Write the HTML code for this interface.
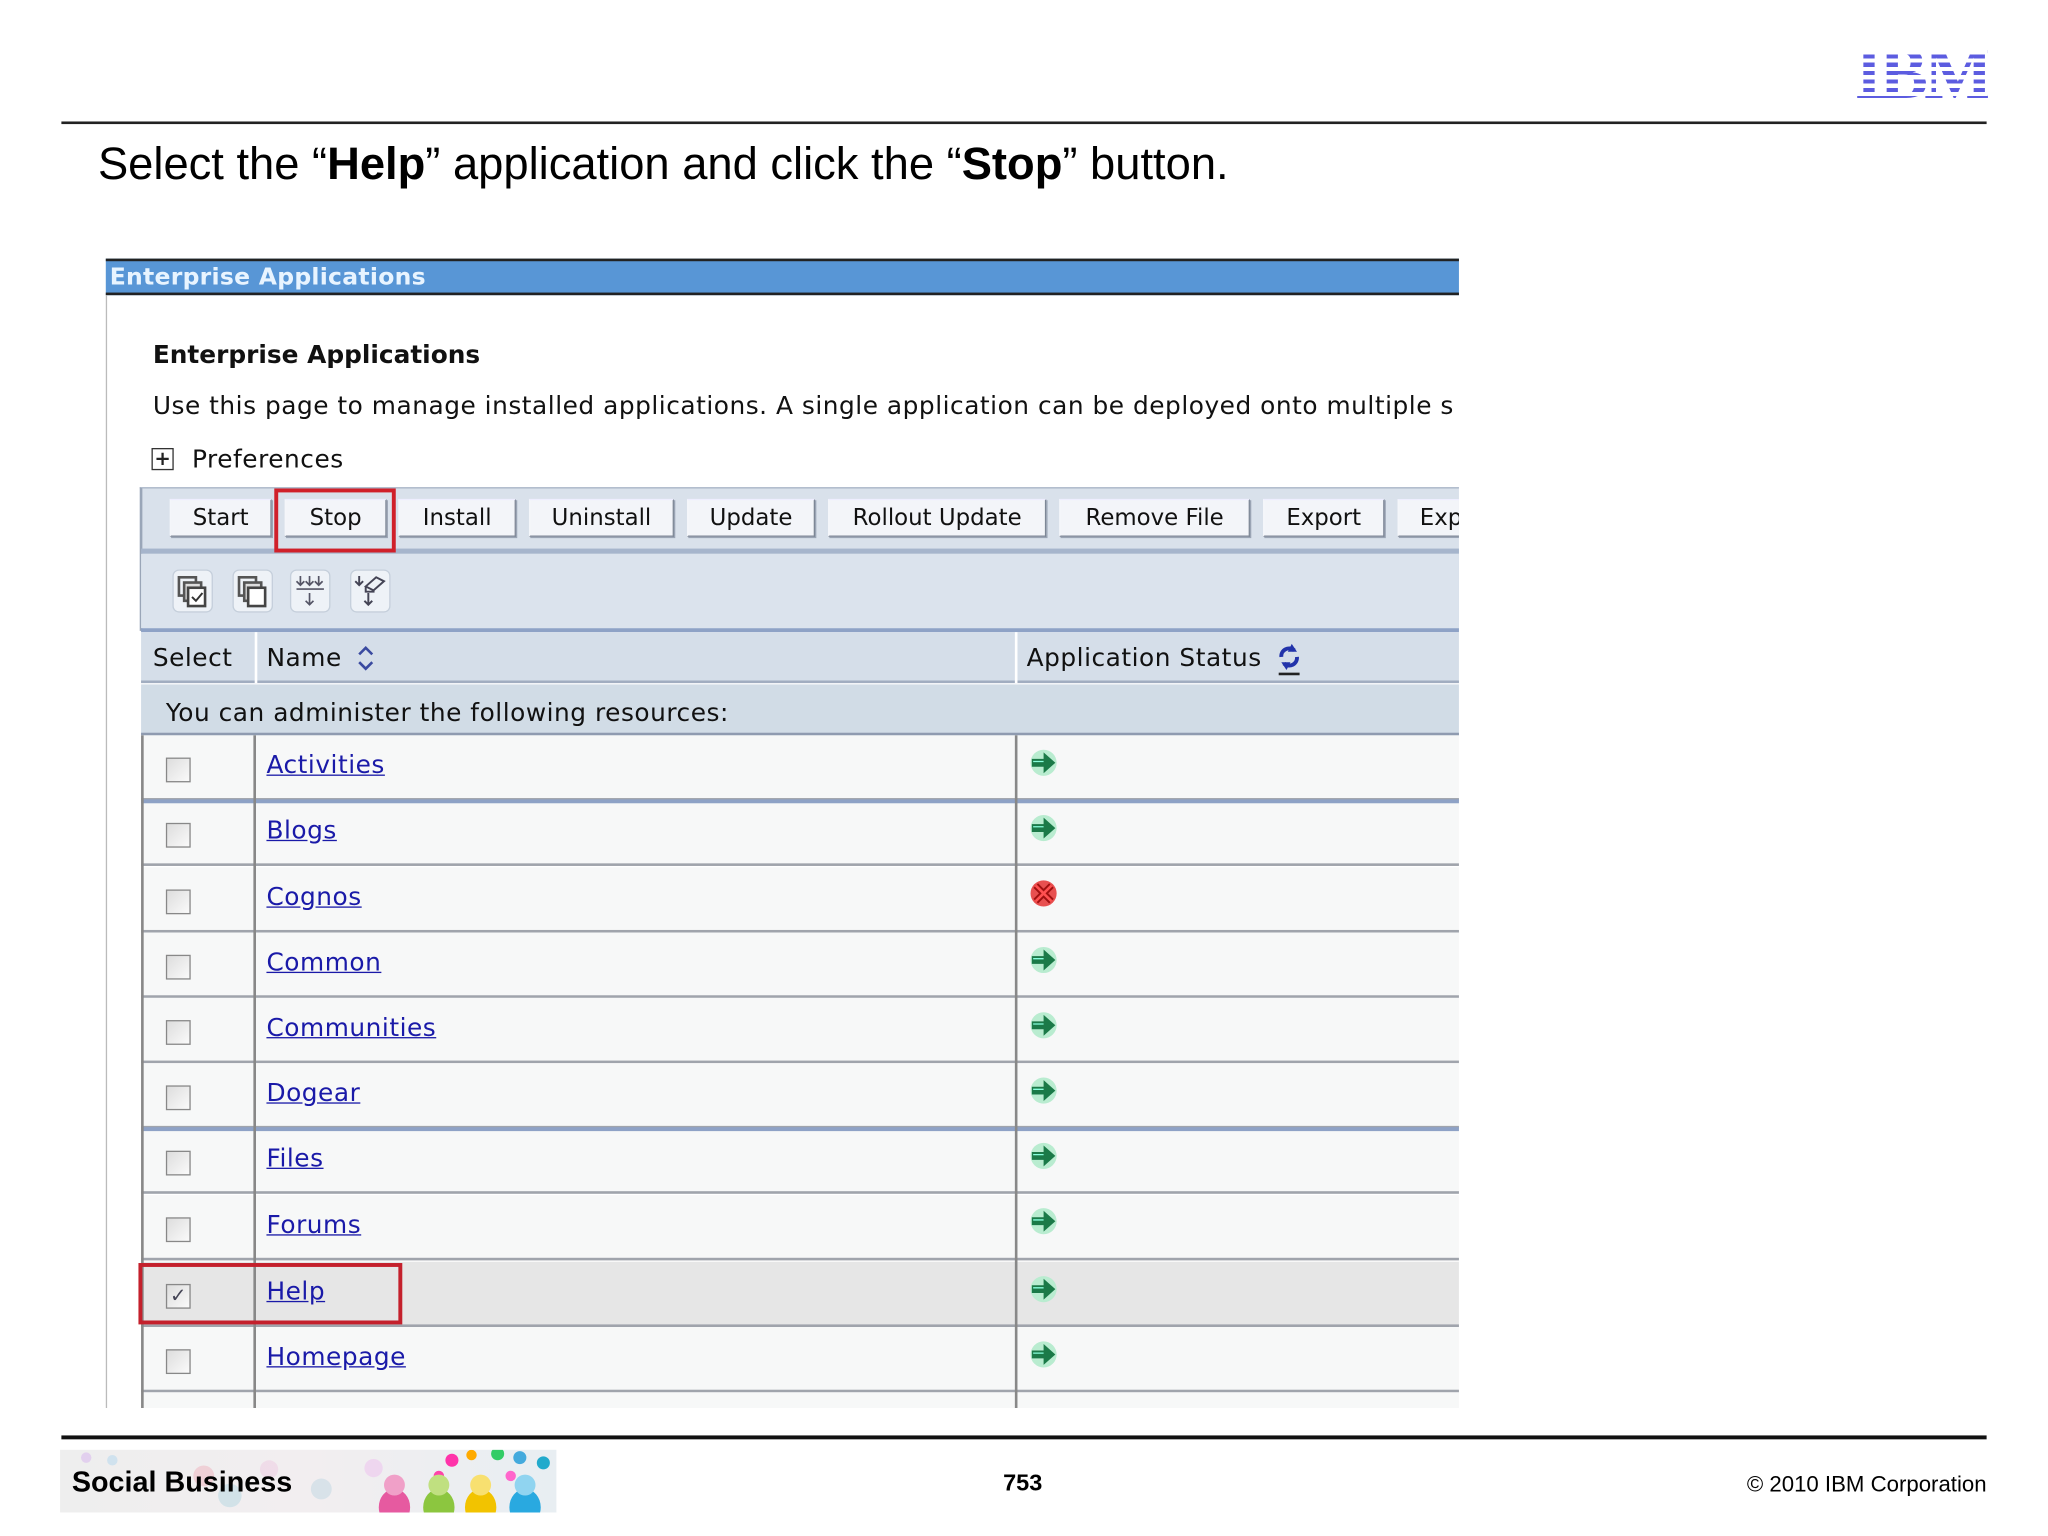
<!DOCTYPE html>
<html><head><meta charset="utf-8"><style>
*{margin:0;padding:0;box-sizing:border-box}
html,body{width:2048px;height:1536px;overflow:hidden;background:#fff}
#w{position:absolute;left:0;top:0;width:1568px;height:1176px;transform:scale(1.306122);transform-origin:0 0;font-family:"Liberation Sans",sans-serif}
.a{position:absolute}
.v{font-family:"DejaVu Sans",sans-serif;font-size:19px;letter-spacing:.4px;color:#111;white-space:nowrap}
.btn{position:absolute;top:382px;height:29px;border:1px solid #7d8796;border-top-color:#eef;border-left-color:#f4f6fa;background:#f3f5f9;font-family:"DejaVu Sans",sans-serif;font-size:17.5px;line-height:29px;text-align:center;color:#111;box-shadow:1px 1px 0 #9aa4b4}
.row{position:absolute;left:108px;width:1009px;height:50.3px;background:#f7f8f8;border-bottom:2px solid #a0a4ac}
.cb{position:absolute;left:19px;top:17px;width:19px;height:19px;border:1px solid #888;background:linear-gradient(135deg,#ddd,#fafafa)}
.lk{position:absolute;left:96px;top:12px;font-family:"DejaVu Sans",sans-serif;font-size:19px;letter-spacing:.4px;color:#1a1aa8;text-decoration:underline}
.ic{position:absolute;top:436px;width:31px;height:33px;border-radius:5px;background:#eef2f7;border:1px solid #c5cfdb}
</style></head><body><div id="w">
<div class="a" style="left:1420px;top:32px;width:102px;height:50px;overflow:hidden">
<div style="font:bold 56px/50px 'Liberation Serif',serif;color:#5c5ce0;letter-spacing:-3px">IBM</div>
<div class="a" style="left:0;top:0;width:102px;height:50px;background:repeating-linear-gradient(#fff 0,#fff 3.2px,transparent 3.2px,transparent 6.4px)"></div>
</div>
<div class="a" style="left:47px;top:93px;width:1474px;height:2px;background:#222"></div>
<div class="a" style="left:75px;top:107px;font-size:34.7px;color:#000;white-space:nowrap">Select the “<b>Help</b>” application and click the “<b>Stop</b>” button.</div>

<div class="a" style="left:81px;top:198px;width:1036px;height:28px;background:#5896d6;border-top:2px solid #222;border-bottom:2px solid #222"></div>
<div class="a v" style="left:84px;top:202px;color:#e8f4ff;font-weight:bold;font-size:18px;letter-spacing:.2px">Enterprise Applications</div>
<div class="a" style="left:81px;top:226px;width:1px;height:852px;background:#bbb"></div>
<div class="a v" style="left:117px;top:261px;font-weight:bold;letter-spacing:0">Enterprise Applications</div>
<div class="a v" style="left:117px;top:300px">Use this page to manage installed applications. A single application can be deployed onto multiple s</div>
<div class="a" style="left:116px;top:343px;width:17px;height:17px;border:1.5px solid #333;font:bold 15px/14px 'DejaVu Sans';text-align:center;color:#222">+</div>
<div class="a v" style="left:147px;top:341px">Preferences</div>

<div class="a" style="left:107px;top:373px;width:1010px;height:110px;background:#d9e1eb;border-left:2px solid #9aa6b8;border-top:1px solid #a8b4c6"></div>
<div class="a" style="left:108px;top:420px;width:1009px;height:4px;background:#a6b5cc"></div>
<div class="a" style="left:108px;top:424px;width:1009px;height:57px;background:#dbe3ed"></div>
<div class="btn" style="left:130px;width:78px">Start</div>
<div class="btn" style="left:218px;width:78px">Stop</div>
<div class="btn" style="left:305px;width:90px">Install</div>
<div class="btn" style="left:405px;width:111px">Uninstall</div>
<div class="btn" style="left:526px;width:98px">Update</div>
<div class="btn" style="left:634px;width:167px">Rollout Update</div>
<div class="btn" style="left:811px;width:146px">Remove File</div>
<div class="btn" style="left:967px;width:93px">Export</div>
<div class="a" style="left:1070px;top:382px;width:47px;height:30px;overflow:hidden"><div class="btn" style="left:0;top:0;width:90px;text-align:left;padding-left:16px">Export DDL</div></div>
<div class="a" style="left:210px;top:374px;width:93px;height:49px;border:3px solid #d0202a"></div>
<div class="ic" style="left:132px"><svg width="29" height="31"><rect x="4" y="5" width="13" height="14" fill="none" stroke="#555" stroke-width="2"/><rect x="8" y="9" width="13" height="14" fill="#ddd" stroke="#555" stroke-width="2"/><rect x="11" y="13" width="13" height="14" fill="#fff" stroke="#444" stroke-width="2"/><path d="M14 20l3 3 5-6" stroke="#333" fill="none" stroke-width="1.5"/></svg></div>
<div class="ic" style="left:178px"><svg width="29" height="31"><rect x="4" y="5" width="13" height="14" fill="none" stroke="#555" stroke-width="2"/><rect x="8" y="9" width="13" height="14" fill="#ddd" stroke="#555" stroke-width="2"/><rect x="11" y="13" width="13" height="14" fill="#fff" stroke="#444" stroke-width="2"/></svg></div>
<div class="ic" style="left:222px"><svg width="29" height="31" stroke="#556" fill="none" stroke-width="1.3"><path d="M7 4v7M4 8l3 3 3-3M14 4v7M11 8l3 3 3-3M21 4v7M18 8l3 3 3-3M4 14h21M14 17v9M11 23l3 3 3-3"/></svg></div>
<div class="ic" style="left:268px"><svg width="29" height="31" stroke="#445" fill="none" stroke-width="1.5"><path d="M6 4v7M3 8l3 3 3-3M11 12l8-7 6 3-8 7zM11 12v4h6v-1M13 17v9M10 23l3 3 3-3"/></svg></div>
<div class="a" style="left:108px;top:481px;width:1009px;height:3px;background:#8ea2c6"></div>

<div class="a" style="left:108px;top:484px;width:1009px;height:39px;background:#d5dee9;border-bottom:2px solid #a1adc0"></div>
<div class="a" style="left:195px;top:484px;width:2px;height:39px;background:#fff"></div>
<div class="a" style="left:777px;top:484px;width:2px;height:39px;background:#fff"></div>
<div class="a v" style="left:117px;top:493px">Select</div>
<div class="a v" style="left:204px;top:493px">Name</div>
<svg class="a" style="left:272px;top:492px" width="16" height="24" fill="none" stroke="#3a4aa0" stroke-width="2"><path d="M3 9l5-5 5 5M3 15l5 5 5-5"/></svg>
<div class="a v" style="left:786px;top:493px">Application Status</div>
<svg class="a" style="left:975px;top:490px" width="24" height="28"><path d="M6 13a6 6 0 0 1 10-5" stroke="#2233aa" stroke-width="3" fill="none"/><path d="M18 13a6 6 0 0 1-10 5" stroke="#2233aa" stroke-width="3" fill="none"/><path d="M14 3l4 6-7 0z" fill="#2233aa"/><path d="M10 23l-4-6 7 0z" fill="#2233aa"/><rect x="4" y="25" width="16" height="2" fill="#222"/></svg>
<div class="a" style="left:108px;top:524px;width:1009px;height:39px;background:#d1dce6;border-bottom:2px solid #8f9bb0"></div>
<div class="a v" style="left:127px;top:535px">You can administer the following resources:</div>

<div class="row" style="top:563px"><div class="cb"></div><div class="lk">Activities</div></div>
<div class="row" style="top:613px"><div class="cb"></div><div class="lk">Blogs</div></div>
<div class="row" style="top:664px"><div class="cb"></div><div class="lk">Cognos</div></div>
<div class="row" style="top:714px"><div class="cb"></div><div class="lk">Common</div></div>
<div class="row" style="top:764px"><div class="cb"></div><div class="lk">Communities</div></div>
<div class="row" style="top:814px"><div class="cb"></div><div class="lk">Dogear</div></div>
<div class="row" style="top:864px"><div class="cb"></div><div class="lk">Files</div></div>
<div class="row" style="top:915px"><div class="cb"></div><div class="lk">Forums</div></div>
<div class="row" style="top:966px;background:#e6e6e6"><div class="cb" style="font:bold 15px/17px 'DejaVu Sans';color:#445;text-align:center">✓</div><div class="lk">Help</div></div>
<div class="row" style="top:1016px"><div class="cb"></div><div class="lk">Homepage</div></div>
<div class="row" style="top:1066px;height:12px;border-bottom:none"></div>
<div class="a" style="left:108px;top:612px;width:1009px;height:3px;background:#8ea2c6"></div>
<div class="a" style="left:108px;top:863px;width:1009px;height:3px;background:#8ea2c6"></div>
<div class="a" style="left:108px;top:563px;width:2px;height:515px;background:#888"></div>
<div class="a" style="left:194px;top:563px;width:2px;height:515px;background:#888"></div>
<div class="a" style="left:777px;top:563px;width:2px;height:515px;background:#888"></div>
<div class="a" style="left:106px;top:967px;width:202px;height:47px;border:3px solid #c4202c"></div>
<svg width="0" height="0"><defs><g id="ar"><circle cx="11" cy="11" r="10" fill="#b9ecd0"/><path d="M2 8h9V3l9 8-9 8v-5H2z" fill="#1b7a48"/><path d="M3 10h8" stroke="#8fd" stroke-width="1"/></g></defs></svg>
<svg class="a" style="left:788px;top:573px" width="22" height="22"><use href="#ar"/></svg>
<svg class="a" style="left:788px;top:623px" width="22" height="22"><use href="#ar"/></svg>
<svg class="a" style="left:788px;top:673px" width="22" height="22"><circle cx="11" cy="11" r="10" fill="#e85050"/><path d="M5 5l12 12M17 5L5 17" stroke="#a01010" stroke-width="5"/><path d="M5 5l12 12M17 5L5 17" stroke="#ff5050" stroke-width="2"/></svg>
<svg class="a" style="left:788px;top:724px" width="22" height="22"><use href="#ar"/></svg>
<svg class="a" style="left:788px;top:774px" width="22" height="22"><use href="#ar"/></svg>
<svg class="a" style="left:788px;top:824px" width="22" height="22"><use href="#ar"/></svg>
<svg class="a" style="left:788px;top:874px" width="22" height="22"><use href="#ar"/></svg>
<svg class="a" style="left:788px;top:924px" width="22" height="22"><use href="#ar"/></svg>
<svg class="a" style="left:788px;top:976px" width="22" height="22"><use href="#ar"/></svg>
<svg class="a" style="left:788px;top:1026px" width="22" height="22"><use href="#ar"/></svg>

<div class="a" style="left:47px;top:1099px;width:1474px;height:3px;background:#111"></div>
<div class="a" style="left:46px;top:1110px;width:380px;height:48px;background:linear-gradient(90deg,#eee 0,#f2eef0 50%,#e8eef2 100%);overflow:hidden">
<svg width="380" height="48" style="position:absolute;left:0;top:0">
<g opacity=".35"><circle cx="110" cy="20" r="8" fill="#e9a"/><circle cx="130" cy="35" r="9" fill="#9cd"/><circle cx="160" cy="15" r="7" fill="#ebd"/><circle cx="200" cy="30" r="8" fill="#acd"/><circle cx="240" cy="14" r="7" fill="#eae"/><circle cx="20" cy="6" r="4" fill="#c9e"/><circle cx="40" cy="8" r="4" fill="#9ce"/></g>
<circle cx="300" cy="8" r="5" fill="#f3a"/><circle cx="315" cy="4" r="4" fill="#fa0"/><circle cx="335" cy="3" r="5" fill="#3c6"/><circle cx="352" cy="6" r="5" fill="#4ad"/><circle cx="370" cy="10" r="5" fill="#2ac"/><circle cx="345" cy="20" r="4" fill="#f6c"/><circle cx="290" cy="20" r="4" fill="#f4a"/>
<ellipse cx="256" cy="44" rx="12" ry="14" fill="#e65aa0"/><circle cx="256" cy="27" r="8" fill="#f0a0c8"/>
<ellipse cx="290" cy="44" rx="12" ry="14" fill="#8cc63f"/><circle cx="290" cy="27" r="8" fill="#c0e080"/>
<ellipse cx="322" cy="44" rx="12" ry="14" fill="#f2c300"/><circle cx="322" cy="27" r="8" fill="#f8e070"/>
<ellipse cx="356" cy="44" rx="12" ry="14" fill="#29a9e0"/><circle cx="356" cy="27" r="8" fill="#90d4f0"/>
</svg>
<div class="a" style="left:9px;top:12px;font-weight:bold;font-size:22px;color:#000">Social Business</div>
</div>
<div class="a" style="left:768px;top:1125px;font-weight:bold;font-size:18px">753</div>
<div class="a" style="right:47px;top:1127px;font-size:17px;color:#000">© 2010 IBM Corporation</div>
</div></body></html>
